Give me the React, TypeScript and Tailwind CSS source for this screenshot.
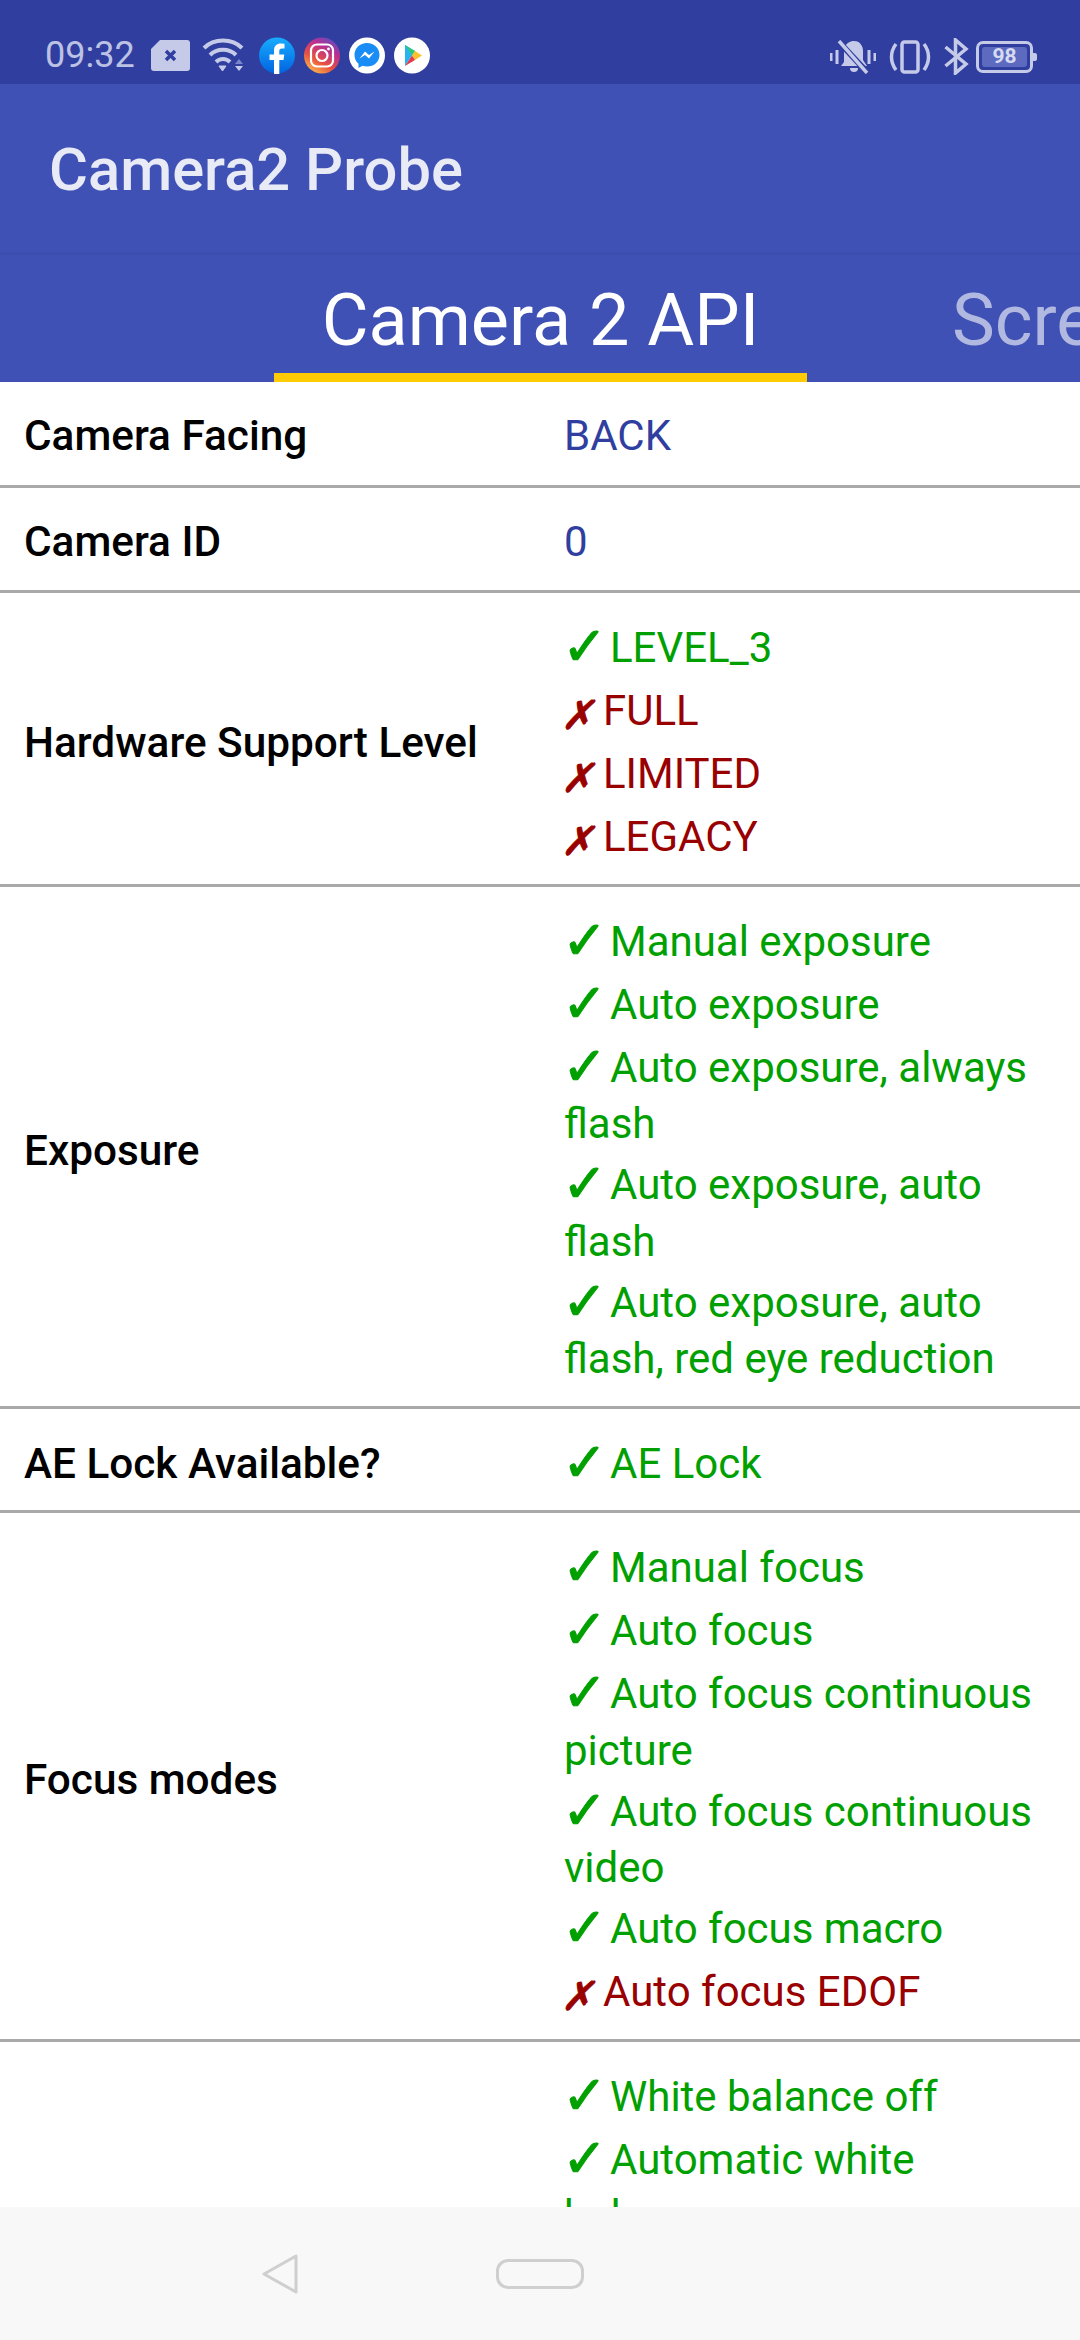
const ROBOTO = "font-['Roboto',sans-serif]";

type Item = { ok: boolean; text: string };

type RowValue = {
  label: string;
  plain?: string;
  items?: Item[];
};

const yes = (text: string): Item => ({ ok: true, text });
const no = (text: string): Item => ({ ok: false, text });

const rows: RowValue[] = [
  { label: "Camera Facing", plain: "BACK" },
  { label: "Camera ID", plain: "0" },
  {
    label: "Hardware Support Level",
    items: [yes("LEVEL_3"), no("FULL"), no("LIMITED"), no("LEGACY")],
  },
  {
    label: "Exposure",
    items: [
      yes("Manual exposure"),
      yes("Auto exposure"),
      yes("Auto exposure, always flash"),
      yes("Auto exposure, auto flash"),
      yes("Auto exposure, auto flash, red eye reduction"),
    ],
  },
  { label: "AE Lock Available?", items: [yes("AE Lock")] },
  {
    label: "Focus modes",
    items: [
      yes("Manual focus"),
      yes("Auto focus"),
      yes("Auto focus continuous picture"),
      yes("Auto focus continuous video"),
      yes("Auto focus macro"),
      no("Auto focus EDOF"),
    ],
  },
  {
    label: "White balance modes",
    items: [
      yes("White balance off"),
      yes("Automatic white balance"),
      yes("Incandescent balance"),
      yes("Fluorescent balance"),
      yes("Warm fluorescent balance"),
      yes("Daylight balance"),
      yes("Cloudy daylight balance"),
    ],
  },
];

function StatusIcons() {
  return (
    <div className="flex items-center">
      <svg width="39" height="31" viewBox="0 0 39 31" className="ml-[16px]">
        <path d="M9 0H36a3 3 0 0 1 3 3V28a3 3 0 0 1-3 3H3a3 3 0 0 1-3-3V9Z" fill="#c5cae9" />
        <path d="M15 11l9 9M24 11l-9 9" stroke="#303f9f" strokeWidth="3.500" />
      </svg>
      <svg width="42" height="34" viewBox="0 0 42 34" className="ml-[12px]" fill="none" stroke="#c5cae9" strokeWidth="4">
        <path d="M2 10C12 0 30 0 40 10" />
        <path d="M8 17C15 10 27 10 34 17" />
        <path d="M14 24C18 20 24 20 28 24" />
        <path d="M17 28h7l-3.500 5Z" fill="#c5cae9" strokeWidth="1" />
        <path d="M33 28h8l-4 5Z" fill="#c5cae9" stroke="none" />
        <path d="M33 26h8l-4-5Z" fill="#7986cb" stroke="none" />
      </svg>
      <svg width="36" height="37" viewBox="0 0 36 37" className="ml-[15px]">
        <defs>
          <linearGradient id="fb" x1="0" y1="0" x2="0" y2="1">
            <stop offset="0" stopColor="#18acfe" />
            <stop offset="1" stopColor="#0163e0" />
          </linearGradient>
        </defs>
        <circle cx="18" cy="18.500" r="18" fill="url(#fb)" />
        <path d="M15 37V23H10.500V17.500H15V13.500C15 9 17.800 6.500 21.800 6.500L25.500 6.800V11.500H23C20.800 11.500 20.300 12.600 20.300 14V17.500H25.300L24.500 23H20.300V37Z" fill="#fff" />
      </svg>
      <svg width="36" height="37" viewBox="0 0 36 37" className="ml-[9px]">
        <defs>
          <linearGradient id="ig" x1="0.2" y1="1" x2="0.8" y2="0">
            <stop offset="0" stopColor="#fdc14f" />
            <stop offset="0.35" stopColor="#e9503f" />
            <stop offset="0.7" stopColor="#b92f92" />
            <stop offset="1" stopColor="#5a4fc5" />
          </linearGradient>
        </defs>
        <circle cx="18" cy="18.500" r="18" fill="url(#ig)" />
        <rect x="7" y="7.500" width="22" height="22" rx="6" fill="none" stroke="#fff" strokeWidth="2.200" />
        <circle cx="18" cy="18.500" r="5.500" fill="none" stroke="#fff" strokeWidth="2.200" />
        <circle cx="24.500" cy="12" r="1.400" fill="#fff" />
      </svg>
      <svg width="36" height="37" viewBox="0 0 36 37" className="ml-[9px]">
        <circle cx="18" cy="18.500" r="18" fill="#fff" />
        <path d="M18 6C10.800 6 5.500 11.200 5.500 18C5.500 21.600 7 24.600 9.500 26.700V31L13.500 28.800C14.900 29.300 16.400 29.600 18 29.600C25.200 29.600 30.500 24.500 30.500 18C30.500 11.200 25.200 6 18 6Z" fill="#1a8cf5" />
        <path d="M10.500 21.500L16 14.500L20 18L25.500 14.500L20 21.500L16 18Z" fill="#fff" />
      </svg>
      <svg width="36" height="37" viewBox="0 0 36 37" className="ml-[9px]">
        <circle cx="18" cy="18.500" r="18" fill="#fff" />
        <path d="M11 8V19L18 18.500L21 14Z" fill="#3bc6ee" />
        <path d="M11 8L21 14L18 18.500Z" fill="#2fc67a" />
        <path d="M21 14L28 18.500L21 23L18 18.500Z" fill="#fbc02d" />
        <path d="M11 29V8L18 18.500Z" fill="#26b3ee" />
        <path d="M11 29L18 18.500L21 23Z" fill="#e53950" />
      </svg>
    </div>
  );
}

function SystemIcons() {
  return (
    <div className="flex items-center">
      <svg width="46" height="34" viewBox="0 0 46 34">
        <path d="M1 13v8M7 10v14M39 10v14M45 13v8" stroke="#c5cae9" strokeWidth="3" />
        <path d="M14 9C16 3 20 1 24 1C30 1 33 6 33 11V20L37 26H11L14 22Z" fill="#c5cae9" />
        <path d="M20 28h8a4 4 0 0 1-8 0Z" fill="#c5cae9" />
        <path d="M10 3L36 31" stroke="#303f9f" strokeWidth="6" />
        <path d="M9 1L37 33" stroke="#c5cae9" strokeWidth="3.500" />
      </svg>
      <svg width="42" height="34" viewBox="0 0 42 34" fill="none" stroke="#c5cae9" strokeWidth="3.500" className="ml-[13px]">
        <rect x="13" y="2" width="16" height="30" rx="2.500" />
        <path d="M7 4C1 12 1 22 7 30" />
        <path d="M35 4C41 12 41 22 35 30" />
      </svg>
      <svg width="25" height="37" viewBox="0 0 25 37" fill="none" stroke="#c5cae9" strokeWidth="3.500" className="ml-[13px]">
        <path d="M1.500 9L22 26L11.500 35V2L22 11L1.500 28" />
      </svg>
      <div className="relative ml-[7px] flex h-[32px] w-[57px] items-center justify-center rounded-[7px] border-[3px] border-[#c5cae9]">
        <div className="flex h-[20px] w-[45px] items-center justify-center rounded-[3px] bg-[#5c6bc0] font-['Roboto',sans-serif] text-[21px] leading-none font-bold text-[#d7dbf0]">
          98
        </div>
        <div className="absolute top-[9px] right-[-7px] h-[8px] w-[4px] rounded-r-[2px] bg-[#c5cae9]" />
      </div>
      <div className="w-[47px]" />
    </div>
  );
}

function StatusBar() {
  return (
    <div className={`flex h-[84px] shrink-0 items-end justify-between bg-[#303f9f] pb-[9px] pl-[45px] ${ROBOTO}`}>
      <div className="flex items-center">
        <span className="text-[36px] leading-[40px] text-[#bcc2e3]">09:32</span>
        <StatusIcons />
      </div>
      <SystemIcons />
    </div>
  );
}

function Tabs() {
  return (
    <div className={`flex h-[127px] shrink-0 overflow-hidden bg-[#3f51b5] pl-[274px] ${ROBOTO}`}>
      <div className="flex h-full w-[533px] shrink-0 items-center justify-center border-b-[9px] border-[#ffcb05] pt-[14px] text-[72px] leading-none whitespace-nowrap text-white">
        Camera 2 API
      </div>
      <div className="ml-[145px] flex h-full shrink-0 items-center border-b-[9px] border-transparent pt-[14px] text-[72px] leading-none whitespace-nowrap text-[#b2b9e1]">
        Screen
      </div>
    </div>
  );
}

function Value({ item }: { item: Item }) {
  // one-line entries sit a little further apart than wrapped ones
  const spacing = item.text.length < 18 ? "mb-[2px] last:mb-0" : "";

  return (
    <div className={`${item.ok ? "text-[#00a000]" : "text-[#990000]"} ${spacing}`}>
      <span
        className={
          item.ok
            ? "-ml-[2px] inline-block w-[48px] align-[-3px] font-['DejaVu_Sans',sans-serif] text-[54px] leading-[0] font-bold [-webkit-text-stroke:1px_#00a000]"
            : "inline-block w-[39px] -skew-x-12 align-[-4px] font-['DejaVu_Sans',sans-serif] text-[40px] leading-[0] font-bold [-webkit-text-stroke:1px_#990000]"
        }
      >
        {item.ok ? "✓" : "✗"}
      </span>
      {item.text}
    </div>
  );
}

function Row({ row }: { row: RowValue }) {
  return (
    <div
      className={`flex items-center border-b-[3px] border-[#a9a9a9] px-[24px] ${
        row.plain ? "pt-[26px] pb-[20px]" : "pt-[27px] pb-[18px]"
      }`}
    >
      <div className="w-[540px] shrink-0 text-[42.3px] leading-[56px] font-medium text-black">
        {row.label}
      </div>
      <div className="flex min-w-0 flex-1 flex-col gap-[4.5px] text-[42px] leading-[56.5px]">
        {row.plain ? (
          <div className="text-[#303f9f]">{row.plain}</div>
        ) : (
          row.items?.map((item) => <Value item={item} key={item.text} />)
        )}
      </div>
    </div>
  );
}

function NavBar() {
  return (
    <div className="flex h-[133px] shrink-0 items-start bg-[#f8f8f8] pt-[47px] pl-[262px]">
      <svg width="36" height="40" viewBox="0 0 36 40" fill="none" stroke="#cfcfcf" strokeWidth="3" strokeLinejoin="round">
        <path d="M34 2V38L2 20Z" />
      </svg>
      <div className="mt-[5px] ml-[198px] h-[30px] w-[88px] rounded-[12px] border-[3px] border-[#cfcfcf]" />
    </div>
  );
}

export default function App() {
  return (
    <div className={`flex h-[2340px] w-[1080px] flex-col overflow-hidden bg-white ${ROBOTO}`}>
      <StatusBar />
      <div className="flex h-[171px] shrink-0 items-center border-b-[3px] border-[#3d4eae] bg-[#3f51b5] pt-[5px] pl-[49px] text-[59.7px] leading-none font-medium text-[#e8eaf6]">
        Camera2 Probe
      </div>
      <Tabs />
      <div className="min-h-0 flex-1 overflow-hidden">
        {rows.map((row) => (
          <Row key={row.label} row={row} />
        ))}
      </div>
      <NavBar />
    </div>
  );
}
